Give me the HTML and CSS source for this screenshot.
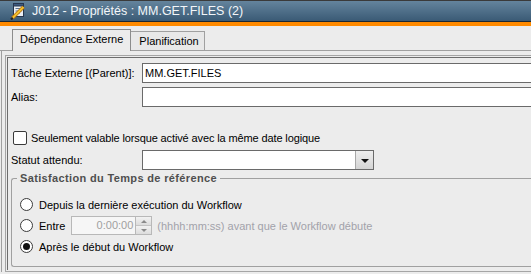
FILE: index.html
```html
<!DOCTYPE html>
<html lang="fr">
<head>
<meta charset="utf-8">
<title>J012 - Propriétés</title>
<link rel="stylesheet" href="styles.css">
</head>
<body>
<div class="window">
  <div class="titlebar">
    <svg class="app-icon" viewBox="0 0 16 18" xmlns="http://www.w3.org/2000/svg">
      <rect x="3.5" y="1.5" width="10" height="13" fill="#e9eef4" stroke="#26364f"/>
      <rect x="3.5" y="1.5" width="10" height="2.5" fill="#3d5a80" stroke="#26364f"/>
      <path d="M5.5 6.5h6M5.5 9h6M5.5 11.5h4" stroke="#5c7290"/>
      <path d="M2.5 16 L13.5 5" stroke="#b86f0a" stroke-width="3.4"/>
      <path d="M2.5 16 L13.5 5" stroke="#f2c230" stroke-width="1.8"/>
      <path d="M1 17.5 L2.8 15.7" stroke="#222" stroke-width="2"/>
    </svg>
    <span class="title">J012 - Propriétés : MM.GET.FILES (2)</span>
  </div>
  <div class="accent"></div>
  <div class="tabs">
    <div class="tab active">Dépendance Externe</div>
    <div class="tab">Planification</div>
  </div>
  <div class="tabpage">
    <div class="panel">
      <div class="form">
        <div class="row">
          <span class="lbl">Tâche Externe [(Parent)]:</span>
          <div class="field">MM.GET.FILES</div>
        </div>
        <div class="row">
          <span class="lbl">Alias:</span>
          <div class="field"></div>
        </div>
        <div class="row check-row">
          <span class="checkbox"></span>
          <span class="check-text">Seulement valable lorsque activé avec la même date logique</span>
        </div>
        <div class="row status-row">
          <span class="lbl">Statut attendu:</span>
          <div class="select"><span class="select-btn"><span class="tri"></span></span></div>
        </div>
        <fieldset class="group">
          <legend>Satisfaction du Temps de référence</legend>
          <div class="opt"><span class="radio"></span><span>Depuis la dernière exécution du Workflow</span></div>
          <div class="opt">
            <span class="radio"></span><span>Entre</span>
            <div class="spin">
              <span class="spin-val">0:00:00</span>
              <span class="spin-btns"><span class="spin-up"><span class="up"></span></span><span class="spin-down"><span class="down"></span></span></span>
            </div>
            <span class="hint">(hhhh:mm:ss) avant que le Workflow débute</span>
          </div>
          <div class="opt"><span class="radio checked"></span><span>Après le début du Workflow</span></div>
        </fieldset>
      </div>
    </div>
  </div>
</div>
</body>
</html>
```

FILE: styles.css
```css
html, body {
  margin: 0;
  padding: 0;
}
body {
  width: 531px;
  height: 274px;
  overflow: hidden;
  background: #ececec;
  font-family: "Liberation Sans", Arial, sans-serif;
  font-size: 11px;
  color: #000;
}
.window {
  width: 100%;
}
.titlebar {
  height: 20px;
  border-top: 1px solid #3a3a3a;
  border-bottom: 1px solid #1b2733;
  background: linear-gradient(#64849d, #3a5a75);
  display: flex;
  align-items: center;
}
.app-icon {
  width: 16px;
  height: 18px;
  margin-left: 10px;
  margin-right: 6px;
  flex: none;
}
.title {
  color: #f3f6f9;
  font-size: 12.5px;
}
.accent {
  height: 4px;
  background: #ff8a00;
}
.tabs {
  height: 24px;
  display: flex;
  align-items: flex-end;
  padding-left: 12px;
  border-bottom: 1px solid #a0a0a0;
}
.tab {
  height: 18px;
  line-height: 18px;
  padding: 0 5px 0 8px;
  border: 1px solid #a0a0a0;
  border-bottom: none;
  border-left: none;
  background: #e8e8e8;
}
.tab.active {
  height: 18px;
  padding: 0 7px 3px 7px;
  margin-bottom: -1px;
  border: 1px solid #8c8c8c;
  border-bottom: none;
  background: #ececec;
  position: relative;
  z-index: 1;
}
.tabpage {
  border-left: 1px solid #a0a0a0;
  margin-left: 1px;
  padding: 4px 0 0 3px;
}
.panel {
  border: 1px solid #a5a5a5;
  border-right: none;
  padding: 1px 0 1px 1px;
}
.form {
  border-top: 1px solid #6d6d6d;
  border-left: 1px solid #6d6d6d;
  padding: 5px 0 3px 3px;
}
.row {
  display: flex;
  align-items: center;
  height: 20px;
}
.row + .row {
  margin-top: 4px;
}
.lbl {
  width: 131px;
  flex: none;
}
.field {
  flex: 1;
  height: 18px;
  line-height: 18px;
  border: 1px solid #6a6a6a;
  border-right: none;
  background: #fff;
  padding-left: 2px;
}
.row.check-row {
  height: 15px;
  margin-top: 23px;
}
.checkbox {
  width: 14px;
  height: 14px;
  box-sizing: border-box;
  border: 1px solid #3a3a3a;
  border-radius: 2px;
  background: #fff;
  margin-left: 2px;
  margin-right: 4px;
  flex: none;
}
.check-text {
  letter-spacing: -0.12px;
}
.row.status-row {
  margin-top: 5px;
}
.select {
  width: 232px;
  height: 20px;
  box-sizing: border-box;
  border: 1px solid #6a6a6a;
  background: #fff;
  display: flex;
  justify-content: flex-end;
}
.select-btn {
  width: 17px;
  border-left: 1px solid #a8a8a8;
  background: linear-gradient(#eeeeee, #d4d4d4);
  display: flex;
  align-items: center;
  justify-content: center;
}
.tri {
  width: 0;
  height: 0;
  border-left: 4px solid transparent;
  border-right: 4px solid transparent;
  border-top: 4px solid #111;
  margin-top: 1px;
}
.group {
  margin: 1px 0 0 0;
  border: 1px solid #a0a0a0;
  border-right: none;
  border-radius: 3px 0 0 3px;
  padding: 9px 0 9px 5px;
  min-inline-size: 0;
}
.group legend {
  padding: 0 3px;
  font-weight: bold;
  color: #4f4f4f;
  line-height: 14px;
  letter-spacing: 0.35px;
}
.opt {
  display: flex;
  align-items: center;
  height: 21px;
  padding-left: 3px;
}
.radio {
  width: 13px;
  height: 13px;
  box-sizing: border-box;
  border-radius: 50%;
  border: 1px solid #3a3a3a;
  background: #fff;
  margin-right: 6px;
  flex: none;
  display: flex;
  align-items: center;
  justify-content: center;
}
.radio.checked::after {
  content: "";
  width: 7px;
  height: 7px;
  border-radius: 50%;
  background: #111;
}
.spin {
  width: 81px;
  height: 19px;
  box-sizing: border-box;
  margin-left: 6px;
  border: 1px solid #b8b8b8;
  background: #f6f6f6;
  display: flex;
}
.spin-val {
  flex: 1;
  text-align: right;
  padding-right: 2px;
  line-height: 17px;
  color: #a0a0a0;
}
.spin-btns {
  width: 15px;
  border-left: 1px solid #b8b8b8;
  display: flex;
  flex-direction: column;
}
.spin-up, .spin-down {
  flex: 1;
  background: linear-gradient(#f2f2f2, #dcdcdc);
  display: flex;
  align-items: center;
  justify-content: center;
}
.spin-up {
  border-bottom: 1px solid #c4c4c4;
}
.up {
  width: 0;
  height: 0;
  border-left: 3px solid transparent;
  border-right: 3px solid transparent;
  border-bottom: 3px solid #8a8a8a;
}
.down {
  width: 0;
  height: 0;
  border-left: 3px solid transparent;
  border-right: 3px solid transparent;
  border-top: 3px solid #8a8a8a;
}
.hint {
  margin-left: 5px;
  color: #a2a2aa;
}
```
